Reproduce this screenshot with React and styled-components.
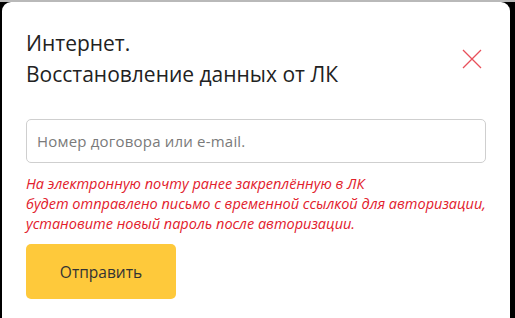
import React from "react";
import styled, { createGlobalStyle } from "styled-components";

const Global = createGlobalStyle`
  html, body { margin: 0; padding: 0; height: 100%; }
  body {
    background: #000;
    font-family: "Open Sans", "Noto Sans", sans-serif;
    overflow: hidden;
  }
  * { box-sizing: border-box; }
`;

const Screen = styled.div`
  display: flex;
  flex-direction: column;
  height: 318px;
`;

const TopStrip = styled.div`
  height: 2px;
  background: #b9b9b9;
  flex-shrink: 0;
`;

const Overlay = styled.div`
  flex: 1;
  display: flex;
  padding: 0 5px 0 2px;
  overflow: hidden;
`;

const Modal = styled.div`
  flex: 1;
  background: #fff;
  border-radius: 9px 9px 0 0;
  padding: 26px 24px 40px;
  display: flex;
  flex-direction: column;
  min-height: 400px;
`;

const Header = styled.div`
  display: flex;
  justify-content: space-between;
  align-items: center;
`;

const Title = styled.h2`
  margin: 0;
  font-size: 21px;
  line-height: 31px;
  font-weight: 400;
  color: #222;
`;

const CloseButton = styled.button`
  width: 24px;
  height: 24px;
  padding: 0;
  margin-right: 2px;
  border: none;
  background: transparent;
  display: flex;
  align-items: center;
  justify-content: center;
  cursor: pointer;
`;

const Input = styled.input`
  margin-top: 29px;
  width: 100%;
  height: 44px;
  border: 1px solid #cfcfcf;
  border-radius: 5px;
  padding: 0 10px;
  font-family: "Open Sans", sans-serif;
  font-size: 15px;
  letter-spacing: 0.2px;
  color: #333;
  outline: none;
  &::placeholder { color: #7a7a7a; }
`;

const Notice = styled.p`
  margin: 11px 0 0;
  font-size: 14.5px;
  line-height: 20px;
  font-style: italic;
  white-space: nowrap;
  color: #e2202c;
`;

const Submit = styled.button`
  margin-top: 10px;
  width: 150px;
  height: 55px;
  border: none;
  border-radius: 5px;
  background: #fec93b;
  color: #333;
  font-family: "Open Sans", sans-serif;
  font-size: 15.5px;
  cursor: pointer;
`;

export default function App() {
  return (
    <>
      <Global />
      <Screen>
        <TopStrip />
        <Overlay>
          <Modal>
            <Header>
              <Title>
                Интернет.
                <br />
                Восстановление данных от ЛК
              </Title>
              <CloseButton aria-label="Закрыть">
                <svg width="20" height="20" viewBox="0 0 20 20">
                  <path d="M1 1 L19 19 M19 1 L1 19" stroke="#e8505b" strokeWidth="1.3" fill="none" />
                </svg>
              </CloseButton>
            </Header>
            <Input placeholder="Номер договора или e-mail." />
            <Notice>
              На электронную почту ранее закреплённую в ЛК
              <br />
              будет отправлено письмо с временной ссылкой для авторизации,
              <br />
              установите новый пароль после авторизации.
            </Notice>
            <div>
              <Submit>Отправить</Submit>
            </div>
          </Modal>
        </Overlay>
      </Screen>
    </>
  );
}
